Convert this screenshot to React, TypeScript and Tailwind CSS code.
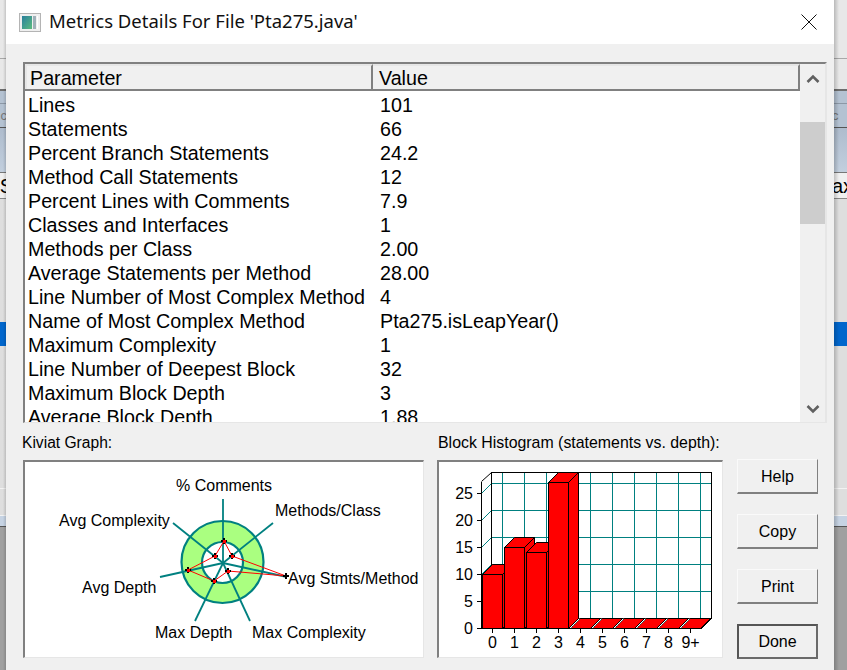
import React from "react";

const rows: [string, string][] = [
  ["Lines", "101"],
  ["Statements", "66"],
  ["Percent Branch Statements", "24.2"],
  ["Method Call Statements", "12"],
  ["Percent Lines with Comments", "7.9"],
  ["Classes and Interfaces", "1"],
  ["Methods per Class", "2.00"],
  ["Average Statements per Method", "28.00"],
  ["Line Number of Most Complex Method", "4"],
  ["Name of Most Complex Method", "Pta275.isLeapYear()"],
  ["Maximum Complexity", "1"],
  ["Line Number of Deepest Block", "32"],
  ["Maximum Block Depth", "3"],
  ["Average Block Depth", "1.88"],
];

function Strip({ side }: { side: "left" | "right" }) {
  const right = side === "right";
  return (
    <div className={`relative flex flex-col overflow-hidden shrink-0 ${right ? "w-[13px]" : "w-[6px]"}`}>
      <div className="h-[58px] bg-[#e8e8e8]" />
      <div className="h-px bg-[#a8a8a8]" />
      <div className="h-[30px] bg-[#e8e8e8]" />
      <div className="h-[2px] bg-[#6e6e6e]" />
      <div className="h-[12px] bg-[#b4c2d2]" />
      <div className="h-px bg-[#8c98a6]" />
      <div className={`h-[23px] bg-[#b4c2d2] flex items-center text-[13px] leading-none text-[#777] font-['Liberation_Sans',sans-serif] ${right ? "justify-start" : "justify-end"}`}>
        <span className={right ? "-ml-[2px]" : "-mr-[1px]"}>c</span>
      </div>
      <div className="h-px bg-[#555]" />
      <div className="h-[44px] bg-gradient-to-b from-[#aebccd] to-[#c2cfde]" />
      <div className="h-px bg-[#777]" />
      <div className={`h-[25px] bg-[#f0f0f0] flex items-center text-[20px] leading-none text-black font-['Liberation_Sans',sans-serif] ${right ? "justify-start" : "justify-end"}`}>
        {right ? <span className="-ml-[2px]">ax</span> : <span className="-mr-[7px]">S</span>}
      </div>
      <div className="h-px bg-[#888]" />
      <div className="h-[123px] bg-[#dedede]" />
      <div className="h-[24px] bg-[#0066cc]" />
      <div className="h-[142px] bg-[#dedede]" />
      <div className="h-px bg-[#f2f2f2]" />
      <div className="h-[26px] bg-[#dedede]" />
      <div className="h-px bg-[#f2f2f2]" />
      <div className="h-[10px] bg-[#c6d3e3]" />
      <div className="flex-1 bg-[#a0a0a0] border-t border-[#555]" />
      {right && <div className="absolute inset-y-0 left-0 w-[5px] bg-gradient-to-r from-black/20 to-transparent" />}
      {!right && <div className="absolute inset-y-0 right-0 w-[3px] bg-gradient-to-l from-black/15 to-transparent" />}
    </div>
  );
}

function Kiviat() {
  const c = [223, 563];
  const spokes = [
    [223, 499],
    [273, 523],
    [287, 577],
    [250, 621],
    [195, 621],
    [160, 577],
    [173, 523],
  ];
  const pts = [
    [224, 541],
    [232, 556],
    [286, 576],
    [228, 571],
    [214, 581],
    [188, 570],
    [215, 556],
  ];
  const labels: [string, number, number][] = [
    ["% Comments", 176, 491],
    ["Methods/Class", 275, 516],
    ["Avg Complexity", 59, 526],
    ["Avg Stmts/Method", 288, 584],
    ["Avg Depth", 82, 593],
    ["Max Depth", 155, 638],
    ["Max Complexity", 252, 638],
  ];
  return (
    <svg width="398" height="195" viewBox="25 462 398 195" className="block">
      <circle cx="222.5" cy="562" r="41" fill="#aaff80" stroke="#008080" strokeWidth="2.2" />
      <circle cx="222.5" cy="562.5" r="20.5" fill="#ffffff" stroke="#008080" strokeWidth="2.2" />
      {spokes.map((s, i) => (
        <line key={i} x1={c[0]} y1={c[1]} x2={s[0]} y2={s[1]} stroke="#008080" strokeWidth="1.8" />
      ))}
      <polygon points={pts.map((p) => p.join(",")).join(" ")} fill="none" stroke="#ff0000" strokeWidth="1" />
      {pts.map((p, i) => (
        <g key={i} stroke="#000000" strokeWidth="1.4" shapeRendering="crispEdges">
          <line x1={p[0] - 3} y1={p[1]} x2={p[0] + 3} y2={p[1]} />
          <line x1={p[0]} y1={p[1] - 3} x2={p[0]} y2={p[1] + 3} />
        </g>
      ))}
      {pts.slice(0, 2).concat(pts.slice(3)).map((p, i) => (
        <rect key={i} x={p[0] - 1} y={p[1] - 1} width="3" height="3" fill="#ff0000" />
      ))}
      {labels.map(([t, x, y]) => (
        <text key={t} x={x} y={y} fontSize="16" fill="#000" fontFamily="'Liberation Sans', sans-serif">
          {t}
        </text>
      ))}
    </svg>
  );
}

function Histogram() {
  const vx = [502.5, 524.5, 546.5, 568.5, 590.5, 612.5, 634.5, 656.5, 678.5, 700.5];
  const hy = [483.5, 510.5, 537.5, 564.5, 591.5];
  const ticks: [string, number][] = [
    ["25", 493.5],
    ["20", 520.5],
    ["15", 547.5],
    ["10", 574.5],
    ["5", 601.5],
    ["0", 628.5],
  ];
  const xl = ["0", "1", "2", "3", "4", "5", "6", "7", "8", "9+"];
  const bars: [number, number, number][] = [
    [482.5, 502.5, 574.5],
    [504.5, 524.5, 547.5],
    [526.5, 546.5, 552.5],
    [548.5, 568.5, 482.5],
  ];
  const font = "'Liberation Sans', sans-serif";
  return (
    <svg width="283" height="195" viewBox="439 462 283 195" className="block">
      <g shapeRendering="crispEdges" stroke="#008080" strokeWidth="1">
        {vx.map((x) => (
          <line key={x} x1={x} y1="472.5" x2={x} y2="618.5" />
        ))}
        {hy.map((y) => (
          <line key={y} x1="491.5" y1={y} x2="711.5" y2={y} />
        ))}
      </g>
      {ticks.slice(0, 5).map(([t, y]) => (
        <line key={t} x1="481.5" y1={y} x2="491.5" y2={y - 10} stroke="#008080" strokeWidth="1" />
      ))}
      <g stroke="#000" strokeWidth="1" shapeRendering="crispEdges">
        <rect x="491.5" y="472.5" width="220" height="146" fill="none" />
        <line x1="481.5" y1="481.5" x2="481.5" y2="628.5" />
        <line x1="481.5" y1="628.5" x2="701.5" y2="628.5" />
        {ticks.map(([t, y]) => (
          <line key={t} x1="477" y1={y} x2="482" y2={y} />
        ))}
        {xl.map((t, i) => (
          <line key={t} x1={492.5 + i * 22} y1="628" x2={492.5 + i * 22} y2="633" />
        ))}
      </g>
      <line x1="481.5" y1="481.5" x2="491.5" y2="472.5" stroke="#000" strokeWidth="1" />
      <line x1="701.5" y1="628.5" x2="711.5" y2="618.5" stroke="#000" strokeWidth="1" />
      {[0, 1, 2, 3, 4, 5].map((i) => {
        const a = 570.5 + i * 22;
        const b = a + 20;
        return (
          <g key={i}>
            <polygon points={`${a},628.5 ${a + 10},618.5 ${b + 10},618.5 ${b},628.5`} fill="#ff0000" stroke="#000" strokeWidth="1" />
            <line x1={a} y1="628" x2={a + 9} y2="619" stroke="#fff" strokeWidth="1" strokeDasharray="2 1" />
          </g>
        );
      })}
      {bars.map(([a, b, t], i) => (
        <g key={i} stroke="#000" strokeWidth="1" fill="#ff0000">
          <polygon points={`${b},${t} ${b + 10},${t - 10} ${b + 10},618.5 ${b},628.5`} />
          <polygon points={`${a},${t} ${a + 10},${t - 10} ${b + 10},${t - 10} ${b},${t}`} />
          <rect x={a} y={t} width={b - a} height={628.5 - t} shapeRendering="crispEdges" />
        </g>
      ))}
      {ticks.map(([t, y]) => (
        <text key={t} x="473" y={y + 5} fontSize="16" textAnchor="end" fill="#000" fontFamily={font}>
          {t}
        </text>
      ))}
      {xl.map((t, i) => (
        <text key={t} x={492.5 + i * 22} y="648" fontSize="16" textAnchor="middle" fill="#000" fontFamily={font}>
          {t}
        </text>
      ))}
    </svg>
  );
}

function Btn({ label, primary }: { label: string; primary?: boolean }) {
  return (
    <div
      className={`w-[81px] h-[35px] flex items-center justify-center pt-[1px] text-[16px] text-black bg-[#f0f0f0] ${
        primary
          ? "border-2 border-t-[#555] border-l-[#555] border-r-[#6a6a6a] border-b-[#6a6a6a]"
          : "border-t border-l border-t-[#fafafa] border-l-[#fafafa] border-r border-r-[#808080] border-b-2 border-b-[#808080]"
      }`}
    >
      {label}
    </div>
  );
}

export default function App() {
  return (
    <div className="w-[847px] h-[670px] overflow-hidden flex bg-[#a0a0a0] font-['Liberation_Sans',sans-serif] text-black">
      <Strip side="left" />
      <div className="w-[828px] h-full bg-[#f0f0f0] flex flex-col shrink-0">
        <div className="h-[44px] bg-white flex items-center shrink-0">
          <div className="ml-[13px] w-[22px] h-[19px] border border-[#b4b4b4] bg-[#efefef] p-[2px] flex gap-[1px]">
            <div className="w-[10px] h-full bg-gradient-to-br from-[#2a7f9a] to-[#5cbb7c]" />
            <div className="w-[3px] h-full bg-[#9fb0b8]" />
            <div className="flex-1 h-full bg-white" />
          </div>
          <div className="ml-[8px] text-[18.5px] leading-none text-[#111] font-['Noto_Sans',sans-serif] -mt-[2px]">
            Metrics Details For File 'Pta275.java'
          </div>
          <svg className="ml-auto mr-[17px]" width="16" height="16" viewBox="0 0 16 16">
            <path d="M0.5 0.5 L15.5 15.5 M15.5 0.5 L0.5 15.5" stroke="#111" strokeWidth="1" fill="none" />
          </svg>
        </div>

        <div className="ml-[17px] mt-[18px] w-[804px] h-[361px] shrink-0 border-t-2 border-l-2 border-t-[#808080] border-l-[#808080] border-r-2 border-r-[#e6e6e6] border-b border-b-[#e6e6e6] flex bg-white overflow-hidden">
          <div className="w-[775px] overflow-hidden">
            <div className="h-[27px] flex text-[19.7px] leading-none border-b-2 border-b-[#808080] bg-[#f0f0f0] mb-[3px]">
              <div className="w-[348px] h-full flex items-center pl-[5px] pt-[2px] border-t-2 border-l-2 border-[#e6e6e6] border-r-2 border-r-[#808080]">
                <span className="-ml-[2px]">Parameter</span>
              </div>
              <div className="flex-1 h-full flex items-center pl-[6px] pt-[2px] border-t-2 border-t-[#e6e6e6] border-r-2 border-r-[#808080]">
                Value
              </div>
            </div>
            {rows.map(([p, v]) => (
              <div key={p} className="h-[24px] flex items-center text-[19.7px] leading-none">
                <div className="w-[352px] pl-[3px] whitespace-nowrap">{p}</div>
                <div className="pl-[3px]">{v}</div>
              </div>
            ))}
          </div>
          <div className="w-[25px] bg-[#f0f0f0] flex flex-col shrink-0">
            <div className="h-[58px] flex items-start justify-center pt-[10px]">
              <svg width="14" height="10" viewBox="0 0 14 10">
                <path d="M1.5 8 L7 2.5 L12.5 8" stroke="#606060" strokeWidth="2.6" fill="none" />
              </svg>
            </div>
            <div className="h-[102px] bg-[#cdcdcd]" />
            <div className="flex-1 flex items-end justify-center pb-[8px]">
              <svg width="14" height="10" viewBox="0 0 14 10">
                <path d="M1.5 2 L7 7.5 L12.5 2" stroke="#606060" strokeWidth="2.6" fill="none" />
              </svg>
            </div>
          </div>
        </div>

        <div className="ml-[16px] mt-[11px] flex leading-none h-[18px] items-center shrink-0">
          <div className="w-[416px] text-[15.6px]">Kiviat Graph:</div>
          <div className="whitespace-nowrap text-[15.9px]">Block Histogram (statements vs. depth):</div>
        </div>

        <div className="ml-[17px] mt-[8px] flex items-start shrink-0">
          <div className="w-[401px] h-[198px] border-t-2 border-l-2 border-t-[#808080] border-l-[#808080] border-r border-b border-r-[#e6e6e6] border-b-[#e6e6e6] bg-white">
            <Kiviat />
          </div>
          <div className="ml-[13px] w-[286px] h-[198px] border-t-2 border-l-2 border-t-[#808080] border-l-[#808080] border-r border-b border-r-[#e6e6e6] border-b-[#e6e6e6] bg-white">
            <Histogram />
          </div>
          <div className="ml-[14px] -mt-px flex flex-col gap-[20px]">
            <Btn label="Help" />
            <Btn label="Copy" />
            <Btn label="Print" />
            <Btn label="Done" primary />
          </div>
        </div>
      </div>
      <Strip side="right" />
    </div>
  );
}
